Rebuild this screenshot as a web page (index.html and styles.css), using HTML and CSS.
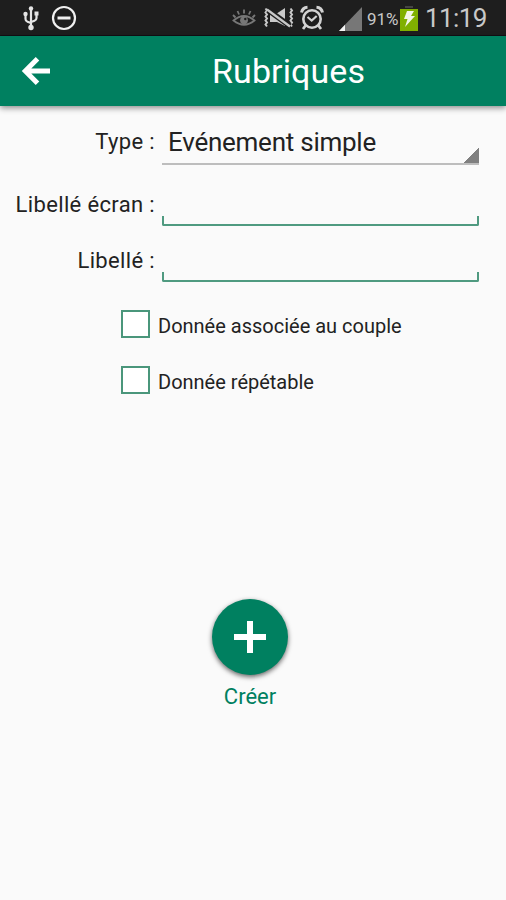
FILE: index.html
```html
<!DOCTYPE html>
<html lang="fr">
<head>
    <meta charset="UTF-8">
    <meta name="viewport" content="width=device-width, initial-scale=1.0">
    <title>Rubriques</title>
    <link rel="stylesheet" href="styles.css">
</head>
<body>
    <div class="status-bar">
        <svg class="icon-usb" width="18" height="26" viewBox="0 0 18 26" fill="none" stroke="#e4e4e4" stroke-width="2.200">
            <path d="M9 3v20M3.500 9v5q0 2 2 2.700l3.500 1.300M14.500 8v5q0 2-2 2.700l-3.500 1.300"/>
            <circle cx="9" cy="3.500" r="2.200" fill="#e4e4e4" stroke="none"/>
            <circle cx="3.500" cy="9" r="2.200" fill="#e4e4e4" stroke="none"/>
            <path d="M12.500 6.500h4v4h-4z" fill="#e4e4e4" stroke="none"/>
            <circle cx="9" cy="22.500" r="2.700" fill="#e4e4e4" stroke="none"/>
        </svg>
        <svg class="icon-block" width="26" height="26" viewBox="0 0 26 26" fill="none" stroke="#f0f0f0">
            <circle cx="13" cy="13" r="11" stroke-width="2.200"/>
            <path d="M6.500 13h13" stroke-width="3"/>
        </svg>
        <svg class="icon-eye" width="24" height="20" viewBox="0 0 24 20" fill="none" stroke="#777" stroke-width="1.800">
            <path d="M1.500 12.500Q12 3.500 22.500 12.500Q12 21 1.500 12.500z"/>
            <circle cx="12" cy="12.300" r="3.900" fill="#777" stroke="none"/>
            <circle cx="13.300" cy="11" r="1.200" fill="#1e1e1e" stroke="none"/>
            <path d="M12 1.500v4M5.500 3l1.600 3.500M18.500 3l-1.600 3.500M1 7l2.500 2.500M23 7l-2.500 2.500"/>
        </svg>
        <svg class="icon-mute" width="30" height="22" viewBox="0 0 30 22" fill="none" stroke="#c8c8c8" stroke-width="2">
            <path d="M1.500 1.500l1.500 2-1.500 2 1.500 2-1.500 2 1.500 2-1.500 2 1.500 2-1.500 2 1.500 2"/>
            <path d="M26.500 1.500l1.500 2-1.500 2 1.500 2-1.500 2 1.500 2-1.500 2 1.500 2-1.500 2 1.500 2"/>
            <path d="M6 7h6l9-6v18l-8-4H6z" fill="#c8c8c8" stroke="none"/>
            <path d="M4 3l22 16" stroke="#1e1e1e" stroke-width="5.500"/>
            <path d="M3 2.500l23 17" stroke-width="2.200"/>
        </svg>
        <svg class="icon-alarm" width="24" height="26" viewBox="0 0 24 26" fill="none" stroke="#d2d2d2">
            <circle cx="12" cy="14" r="8.700" stroke-width="2.600"/>
            <path d="M7.500 12l4.200 3.500 5-4.500" stroke-width="2.200"/>
            <path d="M1.500 7.500Q2.500 2.500 7.500 2.200M22.500 7.500Q21.500 2.500 16.500 2.200" stroke-width="3"/>
            <path d="M6 20l-3 4M18 20l3 4" stroke-width="2.800"/>
        </svg>
        <svg class="icon-signal" width="24" height="24" viewBox="0 0 24 24">
            <path d="M0 24L23 0v24z" fill="#777"/>
            <path d="M0 24l6-6.200V24z" fill="#f4f4f4"/>
        </svg>
        <span class="battery-level">91%</span>
        <svg class="icon-battery" width="18" height="26" viewBox="0 0 18 26">
            <path d="M5 1h8v2H5z" fill="#444"/>
            <path d="M0 4h18v22H0z" fill="#80b000"/>
            <path d="M7 6h7l-3 5h4L5 22l2.500-8H4z" fill="#f2f5e8"/>
        </svg>
        <span class="clock">11:19</span>
    </div>

    <header class="app-bar">
        <button class="back" type="button" aria-label="Retour">
            <svg width="30" height="30" viewBox="0 0 30 30" fill="none" stroke="#fff" stroke-width="5">
                <path d="M29 15H5M16.500 2.800L4.300 15l12.200 12.200"/>
            </svg>
        </button>
        <h1>Rubriques</h1>
    </header>

    <form class="form">
        <div class="row row-type">
            <span class="label">Type :</span>
            <div class="spinner">Evénement simple</div>
        </div>
        <div class="row">
            <label class="label" for="screenLabel">Libellé écran :</label>
            <div class="field"><input type="text" id="screenLabel"></div>
        </div>
        <div class="row">
            <label class="label" for="fieldLabel">Libellé :</label>
            <div class="field"><input type="text" id="fieldLabel"></div>
        </div>
        <label class="check">
            <input type="checkbox">
            <span>Donnée associée au couple</span>
        </label>
        <label class="check">
            <input type="checkbox">
            <span>Donnée répétable</span>
        </label>
    </form>

    <div class="create">
        <button class="fab" type="button" aria-label="Créer">
            <svg width="32" height="32" viewBox="0 0 32 32" fill="none" stroke="#fff" stroke-width="6">
                <path d="M16 0v32M0 16h32"/>
            </svg>
        </button>
        <span class="create-label">Créer</span>
    </div>
</body>
</html>
```
FILE: styles.css
```css
* {
    box-sizing: border-box;
}
body {
    margin: 0;
    height: 900px;
    font-family: Roboto, sans-serif;
    background-color: #fafafa;
    color: #222;
    overflow: hidden;
}
svg {
    display: block;
    flex-shrink: 0;
}

/* Status bar */
.status-bar {
    display: flex;
    align-items: center;
    height: 36px;
    padding-left: 22px;
    background: #1e1e1e;
    border-bottom: 1px solid #130f14;
    color: #c8c8c8;
}
.icon-block {
    margin-left: 11px;
}
.icon-eye {
    margin-left: 155px;
}
.icon-mute {
    margin-left: 8px;
}
.icon-alarm {
    margin-left: 6px;
}
.icon-signal {
    margin: 3px 0 0 15px;
}
.battery-level {
    width: 31px;
    margin: 2px 0 0 4px;
    font-size: 17px;
    white-space: nowrap;
}
.icon-battery {
    margin: 1px 0 0 2px;
}
.clock {
    margin-left: 7px;
    font-size: 26px;
    letter-spacing: -0.6px;
}

/* App bar */
.app-bar {
    display: flex;
    align-items: center;
    height: 70px;
    background: #008060;
    box-shadow: 0 2px 6px rgba(0, 0, 0, 0.45);
    color: #fff;
}
.back {
    margin-left: 21px;
    padding: 0;
    border: none;
    background: none;
}
h1 {
    margin: 0 0 0 161px;
    font-size: 34px;
    font-weight: normal;
    letter-spacing: 0.1px;
}

/* Form */
.form {
    padding: 18px 27px 0 0;
}
.row {
    display: grid;
    grid-template-columns: 155px 1fr;
    column-gap: 7px;
    align-items: end;
    height: 56px;
}
.row-type {
    height: 41px;
    margin-bottom: 5px;
}
.label {
    height: 35px;
    font-size: 22px;
    letter-spacing: 0.35px;
    line-height: 28px;
    text-align: right;
}
.row-type .label {
    height: 37px;
}
.spinner {
    height: 37px;
    padding-left: 6px;
    border-bottom: 2px solid #bdbdbd;
    background: linear-gradient(135deg, transparent 50%, #808080 50%) right bottom / 17px 18px no-repeat border-box;
    font-size: 26px;
    letter-spacing: -0.25px;
    line-height: 28px;
}
.field {
    height: 10px;
    border: 2px solid #4f9a80;
    border-top: none;
    border-radius: 0 0 2px 2px;
}
.field input {
    display: block;
    width: 100%;
    height: 8px;
    border: none;
    outline: none;
    background: transparent;
}
.check {
    display: flex;
    align-items: center;
    height: 28px;
    margin: 28px 0 0 121px;
    font-size: 20px;
}
.check span {
    padding-top: 3px;
}
.check input {
    appearance: none;
    width: 29px;
    height: 28px;
    margin: 0 8px 0 0;
    border: 2px solid #4a967b;
    background: #fff;
}

/* Create button */
.create {
    display: flex;
    flex-direction: column;
    align-items: center;
    width: 500px;
    margin-top: 205px;
    color: #008060;
    font-size: 22px;
}
.fab {
    display: flex;
    align-items: center;
    justify-content: center;
    width: 76px;
    height: 76px;
    padding: 0;
    border: none;
    border-radius: 50%;
    background: #008060;
    box-shadow: 0 2px 5px rgba(0, 0, 0, 0.6);
}
.create-label {
    margin-top: 9px;
}
```
